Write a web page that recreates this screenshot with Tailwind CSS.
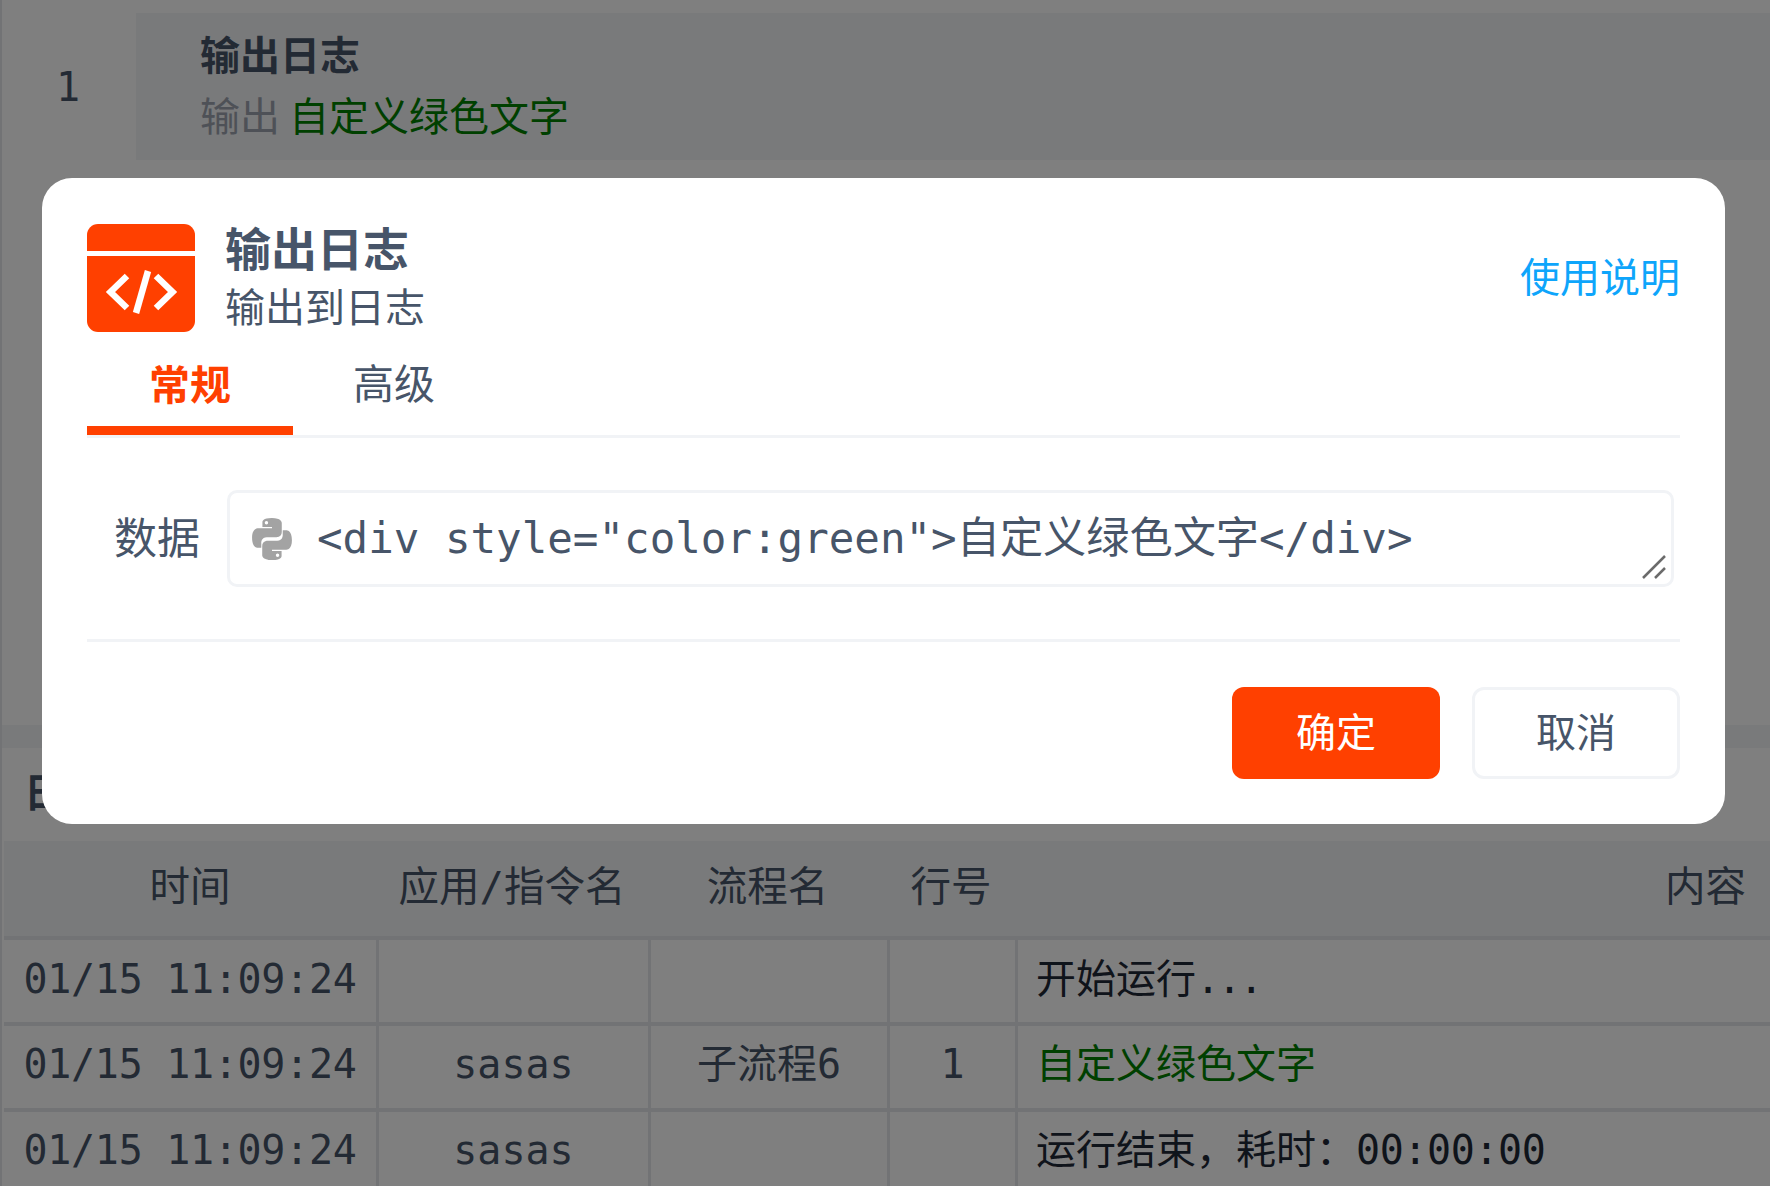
<!DOCTYPE html>
<html lang="zh-CN">
<head>
  <meta charset="UTF-8">
  <title>输出日志</title>
  <script src="https://cdn.jsdelivr.net/npm/@tailwindcss/browser@4"></script>
</head>
<body class="bg-white font-['DejaVu_Sans_Mono','Noto_Sans_CJK_SC',monospace] text-[40px] text-[#475569] overflow-hidden">
  <div class="relative h-[1186px] w-[1770px] overflow-hidden">

    <!-- page behind the dialog -->
    <div class="flex h-[725px] pl-[4px] pt-[13px]">
      <div class="flex h-[147px] w-[132px] items-center justify-center pr-[4px]">1</div>
      <div class="h-[147px] flex-1 bg-[#f3f4f6] pl-[64px] pt-[15px] leading-[56px]">
        <div class="font-bold">输出日志</div>
        <div class="mt-[5px] text-[#9ca3af]">输出<span class="ml-[9px] text-[#008000]">自定义绿色文字</span></div>
      </div>
    </div>
    <div class="h-[23px] bg-[#f3f4f6]"></div>
    <div class="flex h-[93px] items-center pb-[4px] pl-[24px] font-bold">日志</div>
    <div class="ml-[4px] flex h-[95px] items-center bg-[#f3f4f6] pb-[2px] text-[40.500px]">
      <div class="w-[372px] text-center">时间</div>
      <div class="w-[272px] text-center">应用/指令名</div>
      <div class="w-[239px] text-center">流程名</div>
      <div class="w-[128px] text-center">行号</div>
      <div class="flex-1 pr-[24px] text-right">内容</div>
    </div>
    <div class="ml-[4px] flex h-[86px] items-center border-t-[4px] border-[#e5e7eb]">
      <div class="flex h-full w-[375px] items-center justify-center border-r-[3px] border-[#e5e7eb] pb-[5px] tracking-[-0.3px]">01/15 11:09:24</div>
      <div class="h-full w-[272px] border-r-[3px] border-[#e5e7eb]"></div>
      <div class="h-full w-[239px] border-r-[3px] border-[#e5e7eb]"></div>
      <div class="h-full w-[128px] border-r-[3px] border-[#e5e7eb]"></div>
      <div class="flex-1 pb-[5px] pl-[18px] text-[#1f2937]">开始运行<span class="tracking-[-2.500px]">...</span></div>
    </div>
    <div class="ml-[4px] flex h-[86px] items-center border-t-[4px] border-[#e5e7eb]">
      <div class="flex h-full w-[375px] items-center justify-center border-r-[3px] border-[#e5e7eb] pb-[6px] tracking-[-0.3px]">01/15 11:09:24</div>
      <div class="flex h-full w-[272px] items-center justify-center border-r-[3px] border-[#e5e7eb] pb-[6px]">sasas</div>
      <div class="flex h-full w-[239px] items-center justify-center border-r-[3px] border-[#e5e7eb] pb-[6px]">子流程6</div>
      <div class="flex h-full w-[128px] items-center justify-center border-r-[3px] border-[#e5e7eb] pb-[6px]">1</div>
      <div class="flex-1 pb-[6px] pl-[18px] text-[#008000]">自定义绿色文字</div>
    </div>
    <div class="ml-[4px] flex h-[86px] items-center border-t-[4px] border-[#e5e7eb]">
      <div class="flex h-full w-[375px] items-center justify-center border-r-[3px] border-[#e5e7eb] pb-[6px] tracking-[-0.3px]">01/15 11:09:24</div>
      <div class="flex h-full w-[272px] items-center justify-center border-r-[3px] border-[#e5e7eb] pb-[6px]">sasas</div>
      <div class="h-full w-[239px] border-r-[3px] border-[#e5e7eb]"></div>
      <div class="h-full w-[128px] border-r-[3px] border-[#e5e7eb]"></div>
      <div class="flex-1 pb-[6px] pl-[18px] text-[#1f2937]">运行结束，耗时：<span class="tracking-[-0.4px]">00:00:00</span></div>
    </div>

    <!-- overlay and dialog -->
    <div class="absolute inset-y-0 left-0 w-[2px] bg-[#e5e7eb]"></div>
    <div class="absolute inset-0 bg-black/50"></div>
    <div class="absolute left-[42px] top-[178px] h-[646px] w-[1683px] rounded-[30px] bg-white px-[45px] pt-[46px]">
      <div class="flex h-[108px] items-center">
        <svg class="mr-[30px] h-[108px] w-[108px] shrink-0" viewBox="0 0 108 108">
          <rect width="108" height="108" rx="11" fill="#ff4000"/>
          <rect y="27" width="108" height="5" fill="#fff"/>
          <path d="M40 52 L 23.500 68 L 40 84 M69 52 L 85.500 68 L 69 84" fill="none" stroke="#fff" stroke-width="6.500"/>
          <path d="M61 47 L 49 89" fill="none" stroke="#fff" stroke-width="6.500"/>
        </svg>
        <div class="flex-1">
          <div class="text-[46px] font-bold leading-[56px]">输出日志</div>
          <div class="mt-[3px] leading-[54px]">输出到日志</div>
        </div>
        <div class="text-[#0ea5fb]">使用说明</div>
      </div>
      <div class="flex h-[106px] items-end border-b-[3px] border-[#f1f3f6]">
        <div class="h-[106px] w-[206px] border-b-[9px] border-[#ff4000] pt-[29px] text-center text-[41px] font-bold leading-[56px] text-[#ff4000]">常规</div>
        <div class="h-[106px] w-[202px] pt-[28px] text-center text-[41px] leading-[56px]">高级</div>
      </div>
      <div class="mt-[52px] flex h-[97px] items-center">
        <div class="w-[113px] pt-[2px] text-right text-[43px]">数据</div>
        <div class="relative ml-[27px] flex h-[97px] w-[1447px] items-center rounded-[10px] border-[3px] border-[#f1f3f6] pl-[19px]">
          <svg class="h-[46px] w-[46px] shrink-0" viewBox="0 0 24 24">
            <path fill="#a3a3a3" d="M11.900 1C6.600 1 7 3.300 7 3.300v2.400h5v.7H5S1.600 6 1.600 11.400s3 5.200 3 5.200h1.800v-2.500s-.1-3 2.900-3h5s2.800 0 2.800-2.700V3.800S17.500 1 11.900 1zM9.100 2.600a.9.900 0 1 1 0 1.800.9.900 0 0 1 0-1.800z"/>
            <path fill="#a3a3a3" d="M12.100 23c5.300 0 4.900-2.300 4.900-2.300v-2.400h-5v-.7h7s3.400.4 3.400-5-3-5.200-3-5.200h-1.800v2.500s.1 3-2.900 3h-5s-2.800 0-2.800 2.700v4.600s-.4 2.800 5.200 2.800zm2.800-1.600a.9.900 0 1 1 0-1.800.9.900 0 0 1 0 1.800z"/>
          </svg>
          <span class="ml-[22px] whitespace-pre text-[42.500px]">&lt;div style="color:green"&gt;<span class="text-[43.200px]">自定义绿色文字</span>&lt;/div&gt;</span>
          <svg class="absolute bottom-[5px] right-[5px] h-[24px] w-[24px]" viewBox="0 0 24 24">
            <path d="M1 23 L 23 1 M 13 23 L 23 13" stroke="#6b6b6b" stroke-width="2.500" fill="none"/>
          </svg>
        </div>
      </div>
      <div class="mt-[52px] h-[3px] bg-[#f1f3f6]"></div>
      <div class="mt-[45px] flex justify-end gap-[32px]">
        <button class="h-[92px] w-[208px] rounded-[12px] bg-[#ff4000] text-white">确定</button>
        <button class="h-[92px] w-[208px] rounded-[12px] border-[3px] border-[#f1f3f6] bg-white">取消</button>
      </div>
    </div>
  </div>
</body>
</html>
